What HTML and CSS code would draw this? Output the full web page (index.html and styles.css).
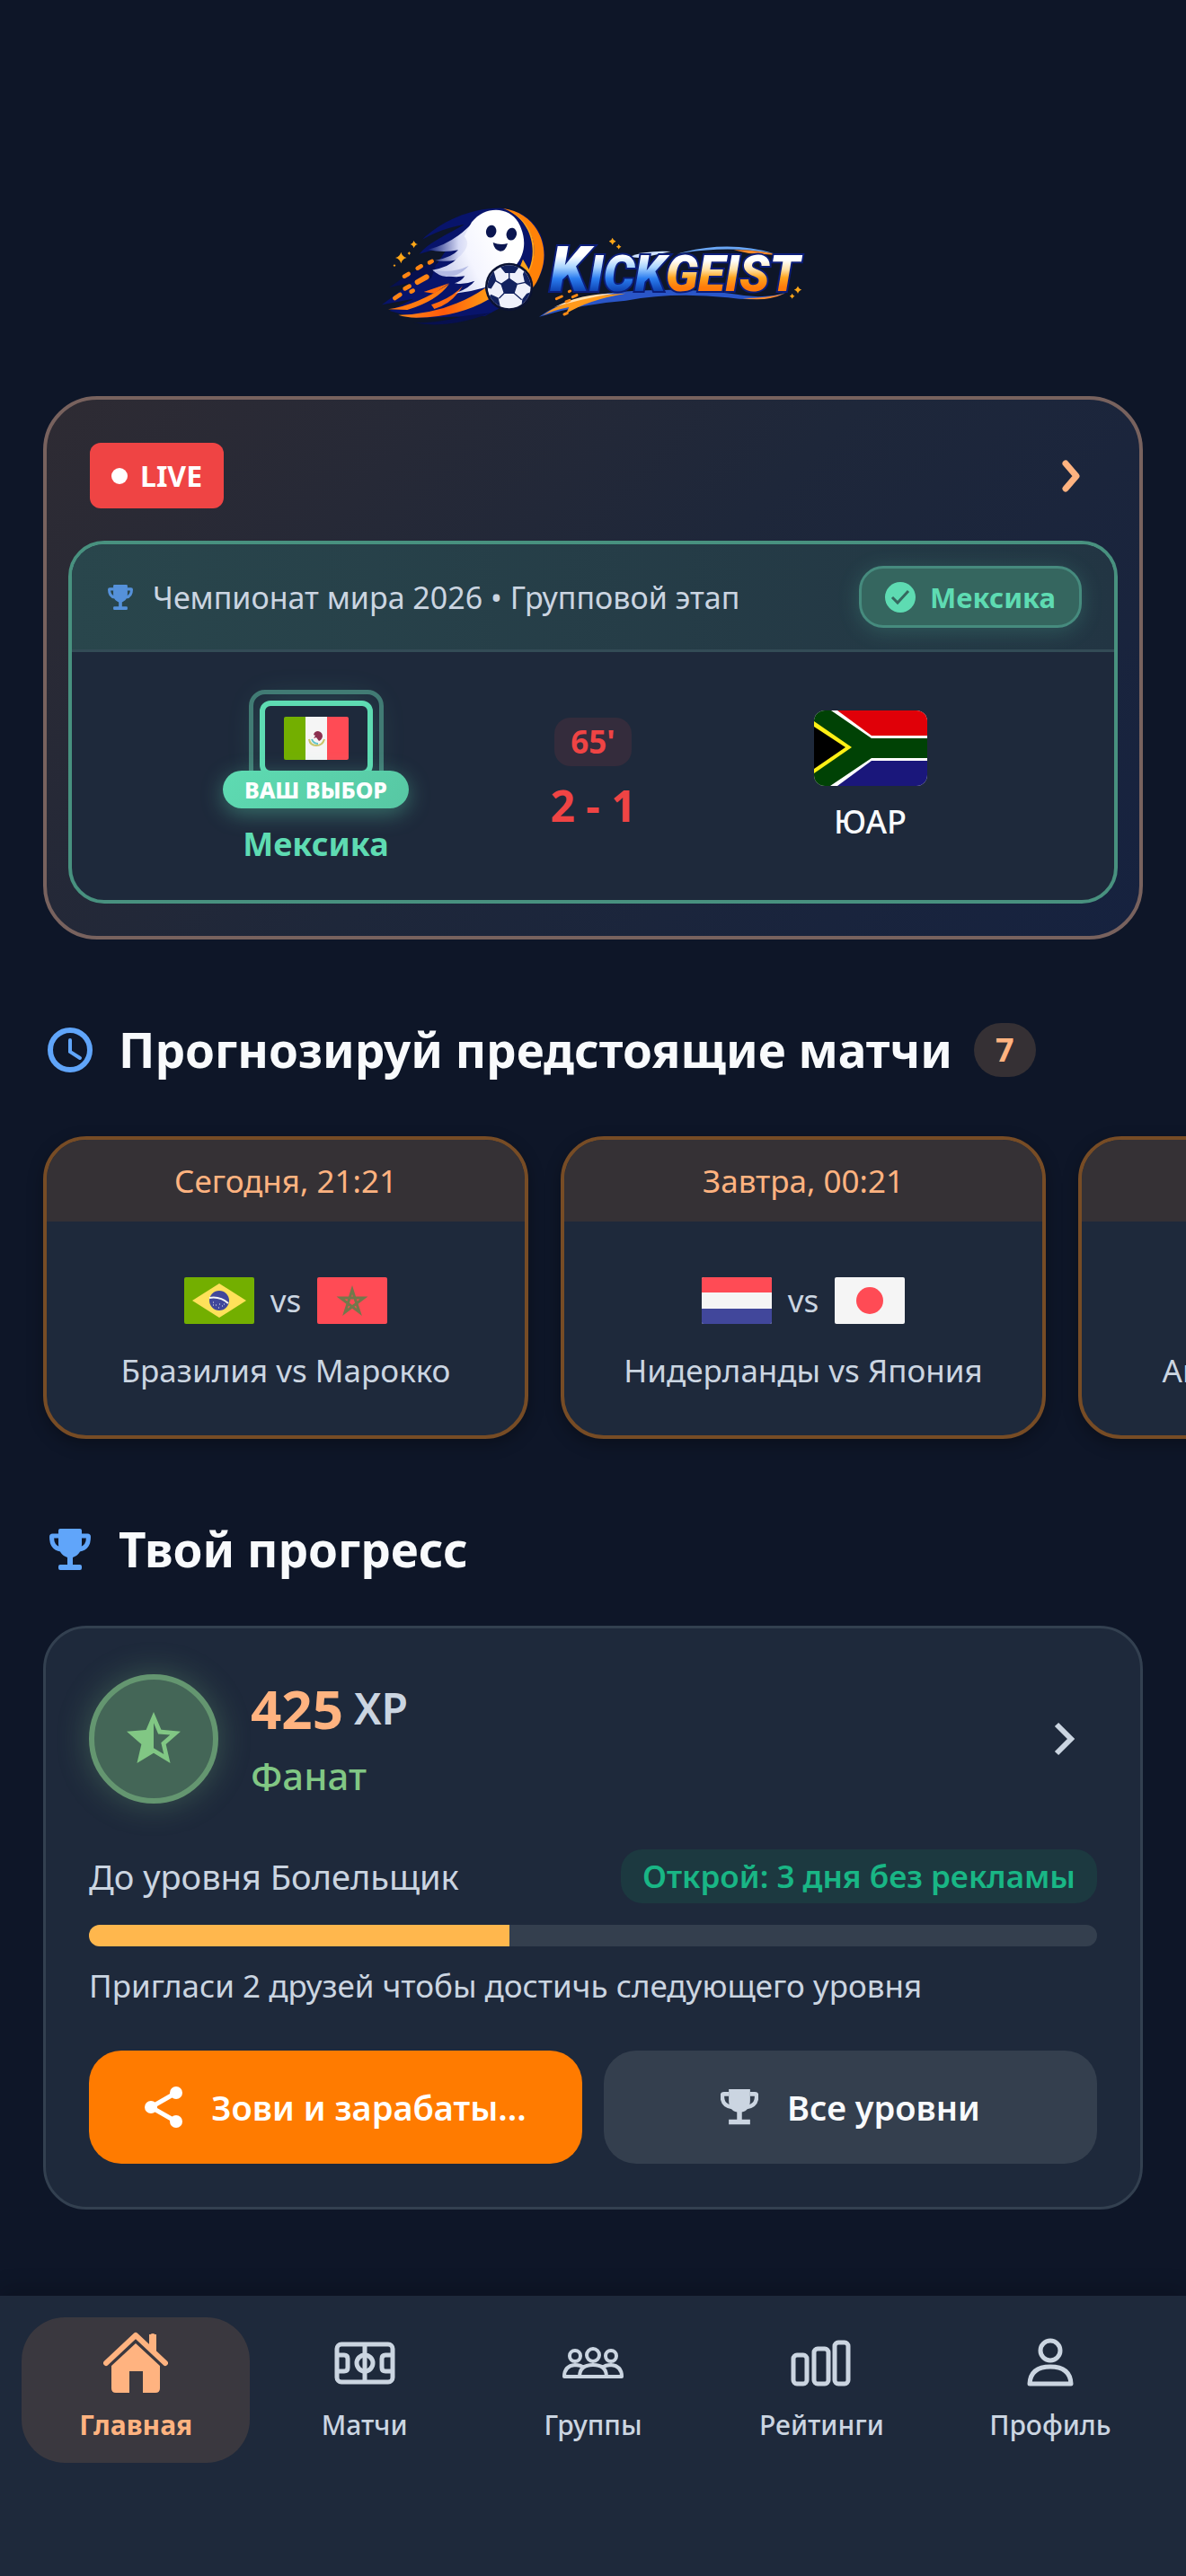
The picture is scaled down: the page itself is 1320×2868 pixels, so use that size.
FILE: index.html
```html
<!DOCTYPE html>
<html lang="ru">
<head>
    <meta charset="UTF-8">
    <meta name="viewport" content="width=device-width, initial-scale=1.0">
    <title>Kickgeist</title>
    <link rel="stylesheet" href="styles.css">
</head>
<body>
    <!-- Shared icons -->
    <svg class="sprite" aria-hidden="true">
        <symbol id="trophy" viewBox="0 0 46 46">
            <path d="M11 8H3.500q-1 0-1 1c0 8 3 13 10 14M35 8h7.500q1 0 1 1c0 8-3 13-10 14" fill="none" stroke="currentColor" stroke-width="5"/>
            <path d="M12 0h22q2 0 2 2v15c0 8-4 13-10 15v8h8q2 0 2 2v2q0 2-2 2H12q-2 0-2-2v-2q0-2 2-2h8v-8c-6-2-10-7-10-15V2q0-2 2-2z" fill="currentColor"/>
        </symbol>
        <symbol id="trophy-flat" viewBox="0 0 46 46">
            <path d="M10 7H4q-2 0-2 2c0 9 4 13 12 14M36 7h6q2 0 2 2c0 9-4 13-12 14" fill="none" stroke="currentColor" stroke-width="5"/>
            <path d="M10 1h26v14c0 8-4 13-10 14v9h10v6H10v-6h10v-9c-6-1-10-6-10-14z" fill="currentColor"/>
        </symbol>
        <symbol id="spark" viewBox="-10 -10 20 20">
            <path d="M0-10Q2-2 10 0Q2 2 0 10Q-2 2-10 0Q-2-2 0-10z" fill="#ffa617"/>
        </symbol>
    </svg>

    <main>
        <header class="logo">
            <svg viewBox="0 0 1560 510" role="img" aria-label="Kickgeist">
                <defs>
                    <linearGradient id="swoosh" x1="0" y1="0" x2="1" y2="0">
                        <stop offset="0" stop-color="#ff8a1c"/>
                        <stop offset="0.5" stop-color="#ff5a0a"/>
                        <stop offset="1" stop-color="#ff9a14"/>
                    </linearGradient>
                    <linearGradient id="ghost" x1="0" y1="0.600" x2="0.700" y2="0.300">
                        <stop offset="0" stop-color="#c3c9ea"/>
                        <stop offset="0.500" stop-color="#f4f5ff"/>
                        <stop offset="1" stop-color="#fff"/>
                    </linearGradient>
                    <linearGradient id="tail" x1="0" y1="0" x2="1" y2="0">
                        <stop offset="0" stop-color="#0a1a78"/>
                        <stop offset="0.600" stop-color="#d5d9f5"/>
                        <stop offset="1" stop-color="#fff"/>
                    </linearGradient>
                    <linearGradient id="ice" gradientUnits="userSpaceOnUse" x1="0" y1="195" x2="0" y2="345">
                        <stop offset="0.200" stop-color="#fff"/>
                        <stop offset="0.450" stop-color="#a9d4ff"/>
                        <stop offset="0.700" stop-color="#2b7df0"/>
                        <stop offset="1" stop-color="#0c3fae"/>
                    </linearGradient>
                    <linearGradient id="fire" gradientUnits="userSpaceOnUse" x1="0" y1="195" x2="0" y2="345">
                        <stop offset="0.300" stop-color="#fff"/>
                        <stop offset="0.500" stop-color="#ffe2a8"/>
                        <stop offset="0.680" stop-color="#ffa51f"/>
                        <stop offset="0.900" stop-color="#ff7a0a"/>
                    </linearGradient>
                    <clipPath id="ballClip"><circle cx="500" cy="328" r="72"/></clipPath>
                </defs>

                <!-- blue trails -->
                <path d="M480 66C380 60 270 110 210 170C260 140 320 125 350 120C300 150 230 180 200 218L300 190L260 250L75 388L180 368L100 408L190 432L420 425L560 350Q640 270 612 170Q580 80 480 66z" fill="#08146b"/>
                <path d="M100 330Q180 270 260 240L240 300zM180 448Q300 470 440 415L350 425Q260 450 180 448z" fill="#07104f"/>
                <!-- orange swoosh -->
                <path d="M480 66C590 80 640 190 606 280Q592 320 575 335L560 280C610 210 580 105 480 66z" fill="#ff8208"/>
                <path d="M480 66C560 90 600 190 566 270L546 236L536 262L560 290C615 200 570 92 480 66z" fill="#ffa21a"/>
                <path d="M96 403Q190 390 300 318Q260 375 160 405z" fill="#ff7a10"/>
                <path d="M130 422Q290 420 420 332L432 370Q330 430 190 431Q155 430 130 422z" fill="url(#swoosh)"/>
                <path d="M240 388Q310 365 345 325Q310 385 250 402zM215 345L300 316L250 350z" fill="#ff6a10"/>
                <g stroke="#ff8412" stroke-width="14" stroke-linecap="round">
                    <path d="M194 266l12-7M150 293l14-8M152 334l15-8M118 366l18-12M234 247l8-4M173 344l6-3"/>
                    <path d="M194 312l30-17" stroke-width="18"/>
                </g>
                <!-- ghost -->
                <path d="M228 204Q310 185 372 120L400 240L380 262Q310 285 290 270Q350 260 362 228Q300 248 252 240Q310 230 330 205Q280 215 228 204z" fill="url(#tail)"/>
                <path d="M375 112C420 55 500 60 530 112C560 165 555 220 520 258L440 300L420 330Q370 345 320 350Q370 330 385 308Q350 322 318 316Q340 310 352 292Q290 302 244 272Q300 262 325 235Q380 190 350 160z" fill="url(#ghost)"/>
                <path d="M245 272Q310 285 365 258Q330 296 290 294Q262 290 245 272z" fill="#b4bbe4"/>
                <ellipse cx="440" cy="143" rx="17" ry="21" fill="#0b1650" transform="rotate(12 440 143)"/>
                <ellipse cx="508" cy="152" rx="17" ry="21" fill="#0b1650" transform="rotate(12 508 152)"/>
                <path d="M446 180Q470 190 495 183Q488 210 470 209Q450 205 446 180z" fill="#0b1650"/>
                <!-- ball -->
                <circle cx="500" cy="328" r="80" fill="#0a1233"/>
                <circle cx="500" cy="328" r="72" fill="#eef0fb"/>
                <g clip-path="url(#ballClip)" fill="#12225f" stroke="#12225f" stroke-width="4">
                    <path d="M500 301l26 18-10 30h-32l-10-30zM470 258l34-6 28 8-14 20h-30zM425 292l22-14 8 28-16 26-16-4zM556 268l20 36-2 24-20-14-6-28zM440 356l22 10 6 26-14 14-30-30zM560 352l18-6-12 44-24 12 4-32z"/>
                    <path d="M500 301v-22M526 319l28-6M516 349l26 22M484 349l-18 18M474 319l-20-12" fill="none"/>
                </g>
                <use href="#spark" x="120" y="212" width="38" height="38"/>
                <use href="#spark" x="169" y="173" width="26" height="26"/>
                <use href="#spark" x="160" y="210" width="12" height="12"/>
                <use href="#spark" x="112" y="252" width="10" height="10"/>
                <use href="#spark" x="833" y="164" width="24" height="24"/>
                <use href="#spark" x="857" y="185" width="18" height="18"/>
                <use href="#spark" x="1451" y="325" width="26" height="26"/>
                <use href="#spark" x="1436" y="350" width="18" height="18"/>

                <!-- wordmark streaks -->
                <path d="M1060 218Q1230 170 1385 217Q1230 188 1060 218z" fill="#6aa6f5"/>
                <path d="M1250 205Q1340 205 1400 222L1300 216z" fill="#ff8a2a"/>
                <path d="M900 228Q960 205 1040 210L940 232z" fill="#cfe2ff"/>
                <path d="M600 428Q690 360 880 344Q1100 330 1250 352Q1350 372 1430 345Q1350 382 1230 364Q1050 345 890 374Q740 385 600 428z" fill="#2a56c8"/>
                <path d="M612 424Q690 360 890 350Q760 372 690 418L700 396Q650 405 612 424z" fill="#ff9a1c"/>
                <path d="M650 396Q740 350 850 350Q740 368 650 396z" fill="#ffe0b0"/>
                <path d="M1280 366Q1360 378 1420 350Q1360 366 1280 366z" fill="#ff8a2a"/>
                <text class="wordmark" x="636" y="342"><tspan class="wordmark-k" fill="url(#ice)">K</tspan><tspan fill="url(#ice)">ICK</tspan><tspan fill="url(#fire)">GEIST</tspan></text>
                <g stroke="#ff8a14" stroke-width="9" stroke-linecap="round">
                    <path d="M658 368l18-8M690 378l12-5M712 362l14-6M684 420l10-4M700 344l4-2"/>
                </g>
            </svg>
        </header>

        <!-- Live match -->
        <section class="live">
            <div class="live-top">
                <span class="live-badge"><span class="live-dot"></span>LIVE</span>
                <a href="#live" class="live-more" aria-label="Все матчи">
                    <svg viewBox="0 0 20 36"><path d="M4 4l12 14L4 32" fill="none" stroke="currentColor" stroke-width="7" stroke-linecap="round" stroke-linejoin="round"/></svg>
                </a>
            </div>
            <article class="match">
                <div class="match-top">
                    <svg class="match-trophy"><use href="#trophy"/></svg>
                    <span class="match-cup">Чемпионат мира 2026 • Групповой этап</span>
                    <span class="pick-pill">
                        <svg viewBox="0 0 34 34"><circle cx="17" cy="17" r="17" fill="currentColor"/><path d="M8 17l6 6L26 10" fill="none" stroke="#35685f" stroke-width="3"/></svg>
                        Мексика
                    </span>
                </div>
                <div class="match-body">
                    <div class="team picked">
                        <div class="pick">
                            <svg class="flag" viewBox="0 0 72 48">
                                <rect width="24" height="48" fill="#73af00"/>
                                <rect x="24" width="24" height="48" fill="#f5f5f5"/>
                                <rect x="48" width="24" height="48" fill="#ff4b55"/>
                                <path d="M28 25q1 7 8 7t9-7" fill="none" stroke="#c9c56a" stroke-width="2"/>
                                <path d="M31 25q2 5 7 5" fill="none" stroke="#5fc3c9" stroke-width="2"/>
                                <path d="M33 20q1-4 5-4 5 1 5 6-1 4-4 5l-3-4-3 1 2-3z" fill="#8c3050"/>
                            </svg>
                            <span class="pick-label">ВАШ ВЫБОР</span>
                        </div>
                        <span class="team-name">Мексика</span>
                    </div>
                    <div class="score">
                        <span class="minute">65'</span>
                        <span class="result">2 - 1</span>
                    </div>
                    <div class="team">
                        <svg class="flag-big" viewBox="0 0 126 84">
                            <rect width="126" height="84" fill="#fff"/>
                            <path d="M26 0H126V28H64z" fill="#e00008"/>
                            <path d="M26 84H126V56H64z" fill="#1a177b"/>
                            <path d="M0 0H19L64 31H126V53H64L18 84H0z" fill="#004205"/>
                            <path d="M0 12L42 41L0 70z" fill="#fff015"/>
                            <path d="M0 18L35 41L0 65z" fill="#000"/>
                        </svg>
                        <span class="team-name">ЮАР</span>
                    </div>
                </div>
            </article>
        </section>

        <!-- Upcoming matches -->
        <section class="upcoming">
            <h2 class="title">
                <svg viewBox="0 0 60 60"><circle cx="30" cy="30" r="22" fill="none" stroke="currentColor" stroke-width="6"/><path d="M30 19v13l11 7" fill="none" stroke="currentColor" stroke-width="4" stroke-linecap="round"/></svg>
                Прогнозируй предстоящие матчи
                <span class="count">7</span>
            </h2>
            <div class="cards">
                <a href="#match1" class="card">
                    <span class="card-time">Сегодня, 21:21</span>
                    <span class="card-body">
                        <span class="card-flags">
                            <svg viewBox="0 0 78 52">
                                <rect width="78" height="52" fill="#73af00"/>
                                <path d="M39 7L69 26L39 45L9 26z" fill="#ffe15a"/>
                                <circle cx="39" cy="26" r="11" fill="#41479b"/>
                                <path d="M28 23q12-2 21 6" fill="none" stroke="#f5f5f5" stroke-width="2"/>
                                <path d="M32 28h1M35 31h1M39 30h1M42 32h1M38 34h1M44 30h1M32 31h1" stroke="#f5f5f5"/>
                            </svg>
                            vs
                            <svg viewBox="0 0 78 52">
                                <rect width="78" height="52" fill="#ff4b55"/>
                                <path d="M39 14L47 39L26 23H52L31 39z" fill="none" stroke="#73784b" stroke-width="3"/>
                            </svg>
                        </span>
                        <span class="card-names">Бразилия vs Марокко</span>
                    </span>
                </a>
                <a href="#match2" class="card">
                    <span class="card-time">Завтра, 00:21</span>
                    <span class="card-body">
                        <span class="card-flags">
                            <svg viewBox="0 0 78 52">
                                <rect width="78" height="52" fill="#f5f5f5"/>
                                <rect width="78" height="17" fill="#ff4b55"/>
                                <rect y="35" width="78" height="17" fill="#41479b"/>
                            </svg>
                            vs
                            <svg viewBox="0 0 78 52">
                                <rect width="78" height="52" fill="#f5f5f5"/>
                                <circle cx="39" cy="26" r="15" fill="#ff4b55"/>
                            </svg>
                        </span>
                        <span class="card-names">Нидерланды vs Япония</span>
                    </span>
                </a>
                <a href="#match3" class="card">
                    <span class="card-time">Завтра, 06:21</span>
                    <span class="card-body">
                        <span class="card-flags">
                            <svg viewBox="0 0 78 52"><rect width="78" height="52" fill="#41479b"/></svg>
                            vs
                            <svg viewBox="0 0 78 52"><rect width="78" height="52" fill="#ff4b55"/></svg>
                        </span>
                        <span class="card-names">Австралия vs Турция</span>
                    </span>
                </a>
            </div>
        </section>

        <!-- Progress -->
        <section class="progress">
            <h2 class="title">
                <svg class="title-trophy"><use href="#trophy"/></svg>
                Твой прогресс
            </h2>
            <div class="panel">
                <div class="level">
                    <div class="level-icon">
                        <svg viewBox="0 0 24 24"><path d="M22 9.240l-7.190-.620L12 2 9.190 8.630 2 9.240l5.460 4.730L5.820 21 12 17.270 18.180 21l-1.630-7.030zM12 15.400V6.100l1.710 4.040 4.380.380-3.320 2.880 1 4.280z" fill="currentColor"/></svg>
                    </div>
                    <div class="level-info">
                        <div class="xp"><strong>425</strong><span>XP</span></div>
                        <div class="rank">Фанат</div>
                    </div>
                    <a href="#levels" class="level-more" aria-label="Подробнее">
                        <svg viewBox="0 0 24 38"><path d="M3 3l16 16L3 35" fill="none" stroke="currentColor" stroke-width="6"/></svg>
                    </a>
                </div>
                <div class="next">
                    <label for="xpBar">До уровня Болельщик</label>
                    <span class="reward">Открой: 3 дня без рекламы</span>
                </div>
                <progress id="xpBar" class="bar" value="417" max="1000"></progress>
                <p class="hint">Пригласи 2 друзей чтобы достичь следующего уровня</p>
                <div class="actions">
                    <button class="button primary">
                        <svg viewBox="0 0 42 46"><path d="M35 7L7 23L35 39" fill="none" stroke="currentColor" stroke-width="5"/><g fill="currentColor"><circle cx="35" cy="7" r="7"/><circle cx="7" cy="23" r="7"/><circle cx="35" cy="39" r="7"/></g></svg>
                        Зови и зарабаты...
                    </button>
                    <button class="button">
                        <svg><use href="#trophy-flat"/></svg>
                        Все уровни
                    </button>
                </div>
            </div>
        </section>
    </main>

    <nav class="tabs">
        <a href="#home" class="tab active">
            <svg viewBox="0 0 72 72">
                <path d="M3 36L36 5L69 36M55 6v14" fill="none" stroke="currentColor" stroke-width="6" stroke-linecap="round" stroke-linejoin="round"/>
                <path d="M51 4h8v24l-8-8z" fill="currentColor"/>
                <path d="M36 14L63 39V64q0 5-5 5H44V45H29V69H14q-5 0-5-5V39z" fill="currentColor"/>
            </svg>
            Главная
        </a>
        <a href="#matches" class="tab">
            <svg viewBox="0 0 72 72" fill="none" stroke="currentColor" stroke-width="5">
                <rect x="5" y="15" width="62" height="42" rx="5"/>
                <path d="M36 15v42M5 27h8q4 0 4 4v10q0 4-4 4H5M67 27h-8q-4 0-4 4v10q0 4 4 4h8"/>
                <circle cx="36" cy="36" r="9"/>
            </svg>
            Матчи
        </a>
        <a href="#groups" class="tab">
            <svg viewBox="0 0 72 72" fill="none" stroke="currentColor" stroke-width="4" stroke-linejoin="round">
                <circle cx="36" cy="27" r="7"/>
                <circle cx="16" cy="28" r="6"/>
                <circle cx="56" cy="28" r="6"/>
                <path d="M21 51q0-13 15-13t15 13zM22 51H4q0-12 12-13 6 0 10 3M50 51h18q0-12-12-13-6 0-10 3"/>
            </svg>
            Группы
        </a>
        <a href="#ratings" class="tab">
            <svg viewBox="0 0 72 72" fill="none" stroke="currentColor" stroke-width="5">
                <rect x="5" y="27" width="15" height="32" rx="4"/>
                <rect x="28" y="20" width="16" height="39" rx="4"/>
                <rect x="51" y="13" width="15" height="46" rx="4"/>
            </svg>
            Рейтинги
        </a>
        <a href="#profile" class="tab">
            <svg viewBox="0 0 72 72" fill="none" stroke="currentColor" stroke-width="5" stroke-linejoin="round">
                <circle cx="36" cy="22" r="11"/>
                <path d="M13 59q1-19 23-19t23 19z"/>
            </svg>
            Профиль
        </a>
    </nav>
</body>
</html>
```
FILE: styles.css
```css
* {
    box-sizing: border-box;
}
body {
    margin: 0;
    min-height: 100vh;
    display: flex;
    flex-direction: column;
    font-family: "Noto Sans", sans-serif;
    font-size: 35px;
    line-height: 42px;
    color: #cbd5e1;
    background-color: #0e1628;
    overflow-x: hidden;
}
a {
    color: inherit;
    text-decoration: none;
}
svg {
    display: block;
    flex-shrink: 0;
}
.sprite {
    position: absolute;
    width: 0;
    height: 0;
}
main {
    flex: 1;
    padding: 210px 48px 94px;
}
.logo {
    margin-bottom: 61px;
}
.logo svg {
    width: 520px;
    height: 170px;
    margin: 0 auto;
}
.wordmark {
    font-family: Roboto, sans-serif;
    font-size: 165px;
    font-weight: 900;
    font-style: italic;
    stroke: #0b1d7a;
    stroke-width: 12px;
    paint-order: stroke;
}
.wordmark-k {
    font-size: 210px;
}

/* Live match */
.live {
    padding: 48px 24px 36px;
    border: 4px solid #78625e;
    border-radius: 60px;
    background: linear-gradient(135deg, #2e2b33, #1e273a 50%, #16223f);
}
.live-top {
    display: flex;
    justify-content: space-between;
    align-items: center;
    padding: 0 42px 0 24px;
    margin-bottom: 36px;
}
.live-badge {
    display: flex;
    align-items: center;
    gap: 14px;
    height: 73px;
    padding: 0 24px;
    border-radius: 12px;
    background-color: #ef4444;
    color: #fff;
    font-size: 32px;
    font-weight: 700;
}
.live-dot {
    width: 18px;
    height: 18px;
    border-radius: 50%;
    background-color: #fff;
}
.live-more {
    color: #ffb380;
}
.live-more svg {
    width: 20px;
    height: 36px;
}
.match {
    border: 4px solid #48917f;
    border-radius: 40px;
    background-color: #1e293b;
    overflow: hidden;
}
.match-top {
    display: flex;
    align-items: center;
    padding: 24px 36px 24px 40px;
    border-bottom: 3px solid #334b56;
    background: linear-gradient(90deg, #29464c, #223543);
}
.match-trophy {
    width: 28px;
    height: 28px;
    margin-right: 22px;
    color: #5591da;
}
.match-cup {
    flex: 1;
    font-size: 34px;
}
.pick-pill {
    display: flex;
    align-items: center;
    gap: 16px;
    height: 69px;
    padding: 0 26px;
    border: 3px solid #468b7e;
    border-radius: 27px;
    background-color: #35665f;
    box-shadow: 0 4px 24px rgba(94, 219, 178, 0.2);
    color: #5edbb2;
    font-size: 31px;
    font-weight: 700;
}
.pick-pill svg {
    width: 34px;
    height: 34px;
}
.match-body {
    display: grid;
    grid-template-columns: 1fr 170px 1fr;
    align-items: center;
    padding: 40px 48px 38px;
}
.team {
    display: flex;
    flex-direction: column;
    align-items: center;
    gap: 16px;
}
.team-name {
    font-size: 36px;
    line-height: 48px;
    font-weight: 500;
    color: #f8fafc;
}
.picked .team-name {
    font-weight: 700;
    color: #5edbb2;
}
.flag-big {
    width: 126px;
    height: 84px;
    border-radius: 12px;
}
.pick {
    position: relative;
    display: flex;
    align-items: center;
    justify-content: center;
    width: 126px;
    height: 84px;
    margin: 14px 12px 36px;
    border: 6px solid #5edbb2;
    border-radius: 12px;
    box-shadow: 0 0 36px rgba(94, 219, 178, 0.2);
}
.pick::before {
    content: "";
    position: absolute;
    inset: -18px;
    border: 5px solid #417b74;
    border-radius: 18px;
}
.flag {
    width: 72px;
    height: 48px;
    border-radius: 2px;
}
.pick-label {
    position: absolute;
    bottom: -42px;
    padding: 0 24px;
    border-radius: 21px;
    background: linear-gradient(135deg, #5edbb2, #57c7a3);
    box-shadow: 0 6px 24px rgba(94, 219, 178, 0.4);
    color: #fff;
    font-size: 25px;
    font-weight: 800;
    white-space: nowrap;
}
.score {
    display: flex;
    flex-direction: column;
    align-items: center;
    gap: 10px;
    color: #ef4444;
    font-weight: 700;
}
.minute {
    padding: 6px 18px;
    border-radius: 18px;
    background-color: #342c3c;
}
.result {
    font-size: 48px;
    line-height: 68px;
}

/* Section titles */
.title {
    display: flex;
    align-items: center;
    gap: 24px;
    margin: 85px 0 0;
    font-size: 53px;
    line-height: 76px;
    font-weight: 700;
    color: #f8fafc;
}
.title svg {
    width: 60px;
    height: 60px;
    color: #60a5fa;
}
.title .title-trophy {
    padding: 7px;
}
.count {
    padding: 6px 24px;
    border-radius: 30px;
    background-color: #353034;
    color: #ffb380;
    font-size: 36px;
    line-height: 48px;
}

/* Upcoming matches */
.cards {
    display: flex;
    gap: 36px;
    margin: 0 -48px -24px;
    padding: 58px 48px 24px;
    overflow: hidden;
}
.card {
    flex: 0 0 540px;
    border: 4px solid #774c25;
    border-radius: 48px;
    background-color: #1e293b;
    box-shadow: 0 6px 18px rgba(0, 0, 0, 0.3);
    text-align: center;
    overflow: hidden;
}
.card-time {
    display: block;
    padding: 25px 24px 24px;
    background-color: #353135;
    color: #ffb380;
}
.card-body {
    display: flex;
    flex-direction: column;
    gap: 29px;
    padding: 60px 0 51px;
}
.card-flags {
    display: flex;
    justify-content: center;
    align-items: center;
    gap: 18px;
    height: 56px;
}
.card-flags svg {
    width: 78px;
    height: 52px;
    border-radius: 2px;
}

/* Progress */
.panel {
    margin-top: 47px;
    padding: 48px;
    border: 3px solid #334050;
    border-radius: 48px;
    background-color: #1e293b;
}
.level {
    display: flex;
    align-items: center;
    margin-bottom: 48px;
}
.level-icon {
    display: flex;
    align-items: center;
    justify-content: center;
    width: 144px;
    height: 144px;
    margin-right: 36px;
    border: 6px solid #649670;
    border-radius: 50%;
    background-color: #446657;
    box-shadow: 0 0 36px rgba(129, 199, 132, 0.3);
    color: #81c784;
}
.level-icon svg {
    width: 72px;
    height: 72px;
}
.level-info {
    flex: 1;
}
.xp {
    display: flex;
    align-items: center;
    gap: 12px;
    line-height: 82px;
}
.xp strong {
    font-size: 60px;
    color: #ffb380;
}
.xp span {
    font-size: 48px;
    font-weight: 600;
}
.rank {
    font-size: 42px;
    line-height: 68px;
    font-weight: 500;
    color: #81c784;
}
.level-more svg {
    width: 24px;
    height: 38px;
    margin-right: 24px;
}
.next {
    display: flex;
    justify-content: space-between;
    align-items: center;
    margin-bottom: 24px;
    font-size: 38px;
}
.reward {
    padding: 9px 24px;
    border-radius: 24px;
    background-color: #1c3940;
    color: #19b685;
    font-size: 35px;
    font-weight: 600;
}
.bar {
    display: block;
    appearance: none;
    width: 100%;
    height: 24px;
    border: none;
    border-radius: 12px;
    background-color: #343f4e;
    overflow: hidden;
}
.bar::-webkit-progress-bar {
    background-color: #343f4e;
}
.bar::-webkit-progress-value {
    background-color: #ffb74d;
}
.hint {
    margin: 20px 0 48px;
    line-height: 48px;
}
.actions {
    display: flex;
    gap: 24px;
}
.button {
    flex: 1;
    display: flex;
    align-items: center;
    justify-content: center;
    gap: 32px;
    height: 126px;
    padding: 0;
    border: none;
    border-radius: 36px;
    background-color: #343f4e;
    color: #f8fafc;
    font-family: inherit;
    font-size: 38px;
    font-weight: 600;
    white-space: nowrap;
    cursor: pointer;
}
.button svg {
    width: 42px;
    height: 46px;
    color: #cbd5e1;
}
.primary {
    background-color: #ff7b00;
    color: #fff;
}
.primary svg {
    color: #fff;
}

/* Bottom tabs */
.tabs {
    display: flex;
    padding: 24px 24px 126px;
    background-color: #1e293b;
    box-shadow: 0 -6px 24px rgba(0, 0, 0, 0.2);
}
.tab {
    flex: 1;
    display: flex;
    flex-direction: column;
    align-items: center;
    gap: 12px;
    padding: 15px 0 21px;
    border-radius: 48px;
    font-size: 30px;
    font-weight: 500;
}
.tab svg {
    width: 72px;
    height: 72px;
}
.active {
    background-color: #3a383f;
    color: #ffb380;
    font-weight: 700;
}
```
